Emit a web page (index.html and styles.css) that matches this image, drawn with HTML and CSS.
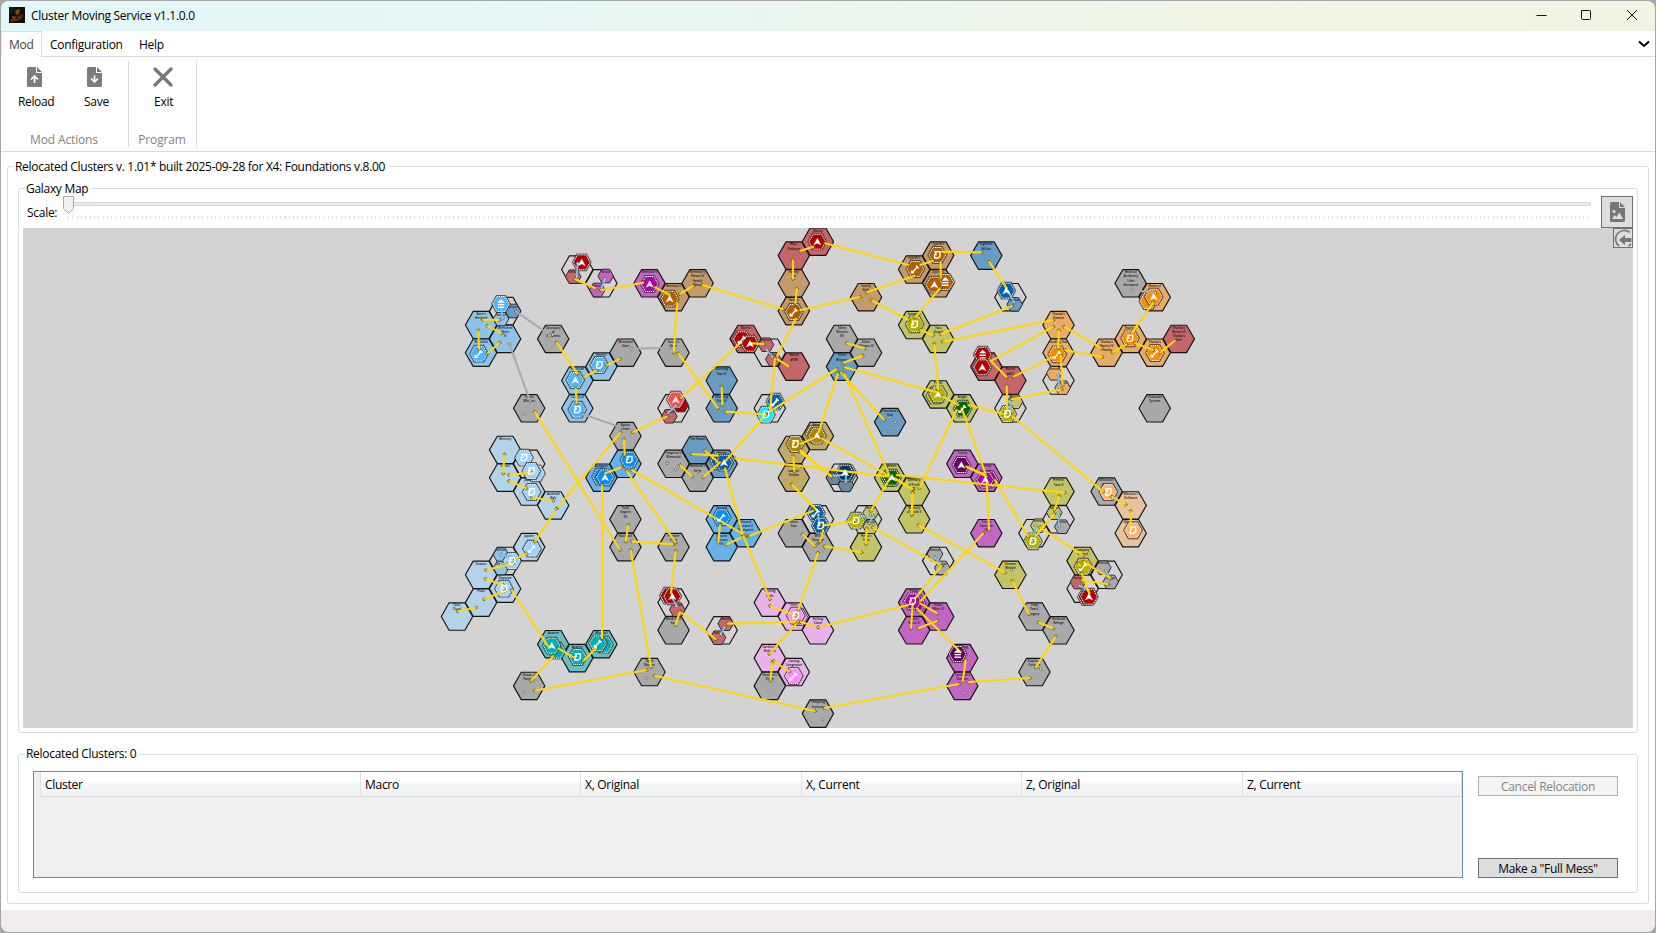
FILE: index.html
```html
<!DOCTYPE html>
<html lang="en">
<head>
<meta charset="utf-8">
<title>Cluster Moving Service</title>
<link rel="stylesheet" href="styles.css">
</head>
<body>
<div class="window">
  <header class="titlebar">
    <svg class="app-icon" viewBox="0 0 16 16"><rect width="16" height="16" fill="#100c08"/><path d="M0 0h6l-2 5-4 3z" fill="#0b2126"/><path d="M1 13l4-3 3 2 4-4 3-1-3 5-5 2-5 1z" fill="#6b2c08"/><path d="M6 4l3-2 2 1-1 4-3 1z" fill="#8a480f"/><path d="M3 9l5 1 4-3-3 3-5 1z" fill="#a35a10"/></svg>
    <span class="title">Cluster Moving Service v1.1.0.0</span>
    <svg class="caption" viewBox="0 0 120 30"><path d="M13.5 14.5h10M58.5 9.500h8a1 1 0 0 1 1 1v7a1 1 0 0 1-1 1h-7a1 1 0 0 1-1-1zM104 9l10 10M114 9l-10 10" fill="none" stroke="#111" stroke-width="1"/></svg>
  </header>
  <nav class="tabs">
    <span class="tab active">Mod</span><span class="tab conf">Configuration</span><span class="tab help">Help</span>
    <svg class="chevron" viewBox="0 0 12 8"><path d="M1 1.500l5 4.500 5-4.500" fill="none" stroke="#000" stroke-width="2"/></svg>
  </nav>
  <section class="ribbon">
    <div class="rgroup actions">
      <div class="rbuttons">
        <div class="rbtn reload"><svg viewBox="0 0 15 20"><path d="M1.500 0H9v6h6v12.500a1.500 1.500 0 0 1-1.500 1.500h-12A1.500 1.500 0 0 1 0 18.500v-17A1.500 1.500 0 0 1 1.500 0zM10 0l5 5h-5z" fill="#7c7c7c"/><path d="M7.500 16V10M4 12.500L7.500 9l3.500 3.500" fill="none" stroke="#fff" stroke-width="1.700"/></svg><span>Reload</span></div>
        <div class="rbtn save"><svg viewBox="0 0 15 20"><path d="M1.500 0H9v6h6v12.500a1.500 1.500 0 0 1-1.500 1.500h-12A1.500 1.500 0 0 1 0 18.500v-17A1.500 1.500 0 0 1 1.500 0zM10 0l5 5h-5z" fill="#7c7c7c"/><path d="M7.500 8.500v6M4 11.500L7.500 15l3.500-3.500" fill="none" stroke="#fff" stroke-width="1.700"/></svg><span>Save</span></div>
      </div>
      <div class="rcaption">Mod Actions</div>
    </div>
    <div class="rgroup program">
      <div class="rbuttons">
        <div class="rbtn exit"><svg viewBox="0 0 20 20"><path d="M2 2l16 16M18 2L2 18" stroke="#767676" stroke-width="3.200" stroke-linecap="round"/></svg><span>Exit</span></div>
      </div>
      <div class="rcaption">Program</div>
    </div>
  </section>
  <main class="content">
    <section class="box outer">
      <h1 class="legend long">Relocated Clusters v. 1.01* built 2025-09-28 for X4: Foundations v.8.00</h1>
      <section class="box galaxy">
        <h2 class="legend">Galaxy Map</h2>
        <div class="scale-row">
          <span class="scale-label">Scale:</span>
          <div class="slider">
            <div class="track"></div>
            <div class="ticks"></div>
            <svg class="thumb" viewBox="0 0 11 18"><path d="M.5.5h10v12l-5 5-5-5z" fill="#f0f0f0" stroke="#acacac"/></svg>
          </div>
          <div class="iconbtn picture"><svg viewBox="0 0 15 20"><path d="M1.500 0H9v6h6v12.500a1.500 1.500 0 0 1-1.500 1.500h-12A1.500 1.500 0 0 1 0 18.500v-17A1.500 1.500 0 0 1 1.500 0zM10 0l5 5h-5z" fill="#767676"/><path d="M2 17l2.500-4 2 2 3-4.500L13 17z" fill="#ddd"/><circle cx="4" cy="9.500" r="1.600" fill="#ddd"/></svg></div>
        </div>
        <div class="map-area">
          <svg id="map" class="map" viewBox="23 228 1610 500"></svg>
          <div class="iconbtn back"><svg viewBox="0 0 18 18"><path d="M15.500 3.200A8 8 0 1 0 5 17M14.500 17l2.500-2" fill="none" stroke="#767676" stroke-width="1.700"/><path d="M5 11l6-5v3h6.500v4H11v3z" fill="#767676"/></svg></div>
        </div>
      </section>
      <section class="box relocated">
        <h2 class="legend">Relocated Clusters: 0</h2>
        <div class="grid">
          <div class="grid-head"><span>Cluster</span><span>Macro</span><span>X, Original</span><span>X, Current</span><span>Z, Original</span><span>Z, Current</span></div>
        </div>
        <div class="side"><button class="btn" disabled>Cancel Relocation</button><button class="btn">Make a "Full Mess"</button></div>
      </section>
    </section>
  </main>
  <footer class="status"></footer>
</div>
<script src="map.js"></script>
</body>
</html>
```
FILE: styles.css
```css
* { box-sizing: border-box; }
body { margin: 0; width: 1656px; height: 933px; overflow: hidden; background: #a5a6a8; font: 12px "Open Sans", "Noto Sans", sans-serif; letter-spacing: -0.28px; color: #000; }
.window { width: 1654px; height: 931px; margin: 1px; background: #fff; border-radius: 8px; overflow: hidden; display: flex; flex-direction: column; }
.titlebar { height: 30px; flex: none; display: flex; align-items: center; padding-left: 8px; background: linear-gradient(90deg, #e2f7f7 0%, #e5f7f6 30%, #f1f5e4 75%, #f2f4e3 100%); }
.app-icon { width: 16px; height: 16px; margin-right: 6px; margin-top: -2px; }
.title { flex: 1; line-height: 16px; padding-bottom: 1px; }
.caption { width: 120px; height: 30px; margin-right: 12px; }
.tabs { height: 26px; flex: none; display: flex; border-bottom: 1px solid #dadbdc; }
.tab { height: 26px; line-height: 28px; }
.tab.active { width: 41px; padding-left: 7px; color: #444; background: #fff; border: 1px solid #dadbdc; border-left-color: #eee; border-bottom: 0; line-height: 26px; }
.tab.conf { width: 97px; padding-left: 8px; letter-spacing: -0.3px; }
.tab.help { flex: 1; }
.chevron { width: 12px; height: 8px; margin: 9px 5px 0 0; }
.ribbon { height: 95px; flex: none; display: flex; border-bottom: 1px solid #dadbdc; padding-top: 4px; }
.rgroup { height: 86px; border-right: 1px solid #dadbdc; display: flex; flex-direction: column; justify-content: space-between; }
.rgroup.actions { width: 128px; }
.rgroup.program { width: 68px; }
.rbuttons { display: flex; }
.rbtn { display: flex; flex-direction: column; height: 56px; }
.rbtn svg { width: 15px; height: 20px; margin: 6px 0 7px 9px; }
.rbtn span { line-height: 16px; }
.rbtn.reload { width: 66px; padding-left: 17px; }
.rbtn.reload span { letter-spacing: -0.35px; }
.rbtn.save { padding-left: 17px; }
.rbtn.save svg { margin-left: 3px; }
.rbtn.exit { padding-left: 25px; }
.rbtn.exit svg { width: 20px; margin-left: -1px; }
.rcaption { color: #838383; text-align: center; line-height: 16px; letter-spacing: -0.15px; padding-right: 1px; margin-bottom: -1px; }
.content { flex: 1; padding: 14px 6px 6px 6px; }
.box { position: relative; border: 1px solid #d5dfe5; border-radius: 3px; }
.legend { position: absolute; left: 6px; top: -8px; margin: 0; padding: 0 4px 0 1px; background: #fff; font-size: 12px; font-weight: 400; line-height: 16px; white-space: nowrap; letter-spacing: -0.3px; }
.outer { height: 738px; padding: 21px 10px 0; }
.galaxy { height: 545px; padding: 6px 4px 0; }
.galaxy > .legend { top: -8px; }
.relocated > .legend { top: -9px; }
.scale-row { display: flex; height: 33px; }
.scale-label { width: 39px; padding: 10px 0 0 4px; line-height: 16px; }
.slider { position: relative; width: 1530px; padding-top: 7px; }
.track { height: 4px; margin: 0 0 0 1px; background: #e7eaea; border: 1px solid #d6dada; }
.ticks { height: 3px; margin: 10px 0 0 6px; background: repeating-linear-gradient(90deg, #e2e2e2 0 1px, transparent 1px 4.330px); }
.thumb { position: absolute; left: 1px; top: 1px; width: 11px; height: 18px; }
.iconbtn { border: 1px solid #707070; background: #ddd; display: flex; align-items: center; justify-content: center; }
.picture { width: 32px; height: 32px; margin-left: 10px; margin-top: 1px; }
.picture svg { width: 15px; height: 20px; }
.map-area { position: relative; width: 1610px; height: 500px; background: #d3d3d3; }
.map { display: block; width: 1610px; height: 500px; }
.back { position: absolute; right: 0; top: 0; width: 20px; height: 20px; }
.back svg { width: 18px; height: 18px; }
.relocated { height: 139px; margin-top: 21px; padding: 16px 19px 0 14px; display: flex; justify-content: space-between; }
.grid { width: 1430px; height: 107px; border: 1px solid #688caf; background: #f0f0f0; padding-left: 6px; }
.grid-head { display: grid; grid-template-columns: 320px 220px 221px 220px 221px 1fr; height: 25px; border-bottom: 1px solid #d5d5d5; border-left: 1px solid #e0e0e0; background: linear-gradient(#fff 0, #fff 40%, #f7f8fa 41%, #f1f2f4 100%); }
.grid-head span { line-height: 25px; padding-left: 4px; border-right: 1px solid #e0e0e0; }
.side { width: 140px; height: 102px; margin-top: 5px; display: flex; flex-direction: column; justify-content: space-between; }
.btn { height: 20px; padding: 0; border: 1px solid #707070; border-radius: 0; background: #ddd; color: #000; font: inherit; letter-spacing: inherit; line-height: 19px; }
.btn:disabled { background: #f4f4f4; border-color: #adb2b5; color: #838383; }
.status { height: 22px; flex: none; background: #f0edec; }
.label { font: 600 3.1px "Open Sans", sans-serif; letter-spacing: 0; fill: #111; text-anchor: middle; }
```
FILE: map.js
```js
const ns = 'http://www.w3.org/2000/svg';
const map = document.getElementById('map');
function add(tag, attrs, text) {
  const e = document.createElementNS(ns, tag);
  for (const k in attrs) e.setAttribute(k, attrs[k]);
  if (text) e.textContent = text;
  map.appendChild(e);
  return e;
}
function hexPoints(x, y, w, h) {
  return [[-w, 0], [-w / 2, -h], [w / 2, -h], [w, 0], [w / 2, h], [-w / 2, h]]
    .map(p => (x + p[0]).toFixed(1) + ',' + (y + p[1]).toFixed(1)).join(' ');
}
const colors = {
  g: '#a9a9a9', l: '#8fc3ea', p: '#b3d3eb', u: '#67b1eb', s: '#689cc4', r: '#c4666a', n: '#c49a6a',
  v: '#c265c4', y: '#c3c368', o: '#e9ac68', k: '#e8b3ea', t: '#67bfc1', d: '#c0aa68', h: '#e8c39c', e: 'none', q: '#6888a0'
};
// Clusters: column, row, colour, label lines
const clusters = `5 2 e|6 3 e|8 3 v Brennan's|9 4 n Brennan's|10 3 n Brennan's/Nexus IV/Family/Nhuut|2 5 e|1 6 l Bore's/Heritage|2 7 l Wretched/Skies/IV|1 8 l Watchful|4 7 g Sanctuary/of/Darkness|7 8 g Wretched/Gate|9 8 g Faulty's/Gate|6 9 l Heretic|5 10 l Hatikvah|5 12 l Litany of|3 12 g Silent/Witness|9 12 e|7 14 g Kaitos/Prime|7 16 u The|6 17 u Antigone|2 15 p Mercury|2 17 p Venus|3 16 e|9 16 g Emperor's/Memorial|10 15 s The Reach|11 16 s Argon|10 17 g Hatikvah's/Edge
15 0 r Matrix|14 1 r Rhy's/Defiance|14 3 n Family/Tkr|14 5 n Family|17 4 n Family/Kritt|19 2 n Zyarth's|20 1 n Zyarth's|20 3 n Zyarth's|19 6 y Ianamus|20 7 y Two/Grand|12 7 r Matrix|13 8 e|14 9 r Matrix/#598|16 7 g Silent/Witness/XII|17 8 g Silent/Witness XI|16 9 s Silent/Witness|11 10 s Morning/Star IV|11 12 s Morning/Star III|13 12 e|18 13 s President's/End|20 11 y Profit|21 12 y Bright|15 14 d Hewa's|14 15 d Pious|14 17 d Wellspring/Ioannis'/Dream|16 17 e|18 17 y Eighteen
22 1 s Eighteen/Billion|23 4 e|28 3 g Heart of/Acrimony/I the/Boneyard|29 4 o Heart of|25 6 o Thuruk's/Demise|25 8 o Guiding Star|25 10 e|27 8 o Tharka's/Ravine IV/Tharka|28 7 o Tharka's|29 8 o Tharka's|30 7 r Tharka's/Ravine III/Tharka's/Fall|22 9 r Matrix|23 10 r Matrix/#451|23 12 e|29 12 g Unknown/System|21 16 v Trinity|22 17 v Trinity/Sanctum
3 18 p Jupiter|4 19 p Asteroid/Belt|3 22 p Jupiter|2 23 e|1 24 p Uranus|2 25 p Neptune|1 26 p Pluto|0 27 p Oort/Cloud|7 20 g Void/Segaris/XII|7 22 g Hatikvah|9 22 g Frontier/Edge|9 26 e|9 28 g Black Hole/Sun|4 29 t Avarice|5 30 t Avarice|6 29 t Windfall|3 32 g Ocean of/Fantasy|8 31 g Open/Market
11 20 u Second|12 21 u Second/Contact II/Flashpoint|11 22 u Second/Contact/VI|14 21 g Silent/Star|15 20 e|15 22 g Wild/Passage/IV|17 20 e|17 22 y Hewa's/Twin|19 18 y Memory/of Profit/X|19 20 y Memory/of Profit II|20 23 e|13 26 k Lasting/Light|14 27 k Fires|15 28 k Rolling/Claim|11 28 e|13 30 k Cardinal's/Redress|14 31 k Lasting/Vengeance|13 32 g Pontifex's/Claim|15 34 g Tempting/Fortune|19 26 v Pious|20 27 v Pious/Mists IV|19 28 v Pious/Mists III
25 18 y Heretic/Twin V|25 20 e|24 21 e|27 18 g Mitsuno's/Oscar|28 19 h Mitsuno's/Defiance|28 21 h Mitsuno's|22 21 v Trinity/Sanctum/VII|23 24 y Unseen/Wealth|26 23 y Company/Regard|27 24 e|26 25 e|24 27 g Leap/Years'/Legacy|25 28 g Hatikvah/Refuge|24 31 g Nopileos'/Fortune|21 30 v Lasting|21 32 v Cardinal's/Domain`;
clusters.split(/[|\n]/).forEach(row => {
  const m = row.match(/^(\d+) (\d+) (\w) ?(.*)$/);
  const x = 457 + m[1] * 24.06, y = 241.7 + m[2] * 13.88;
  add('polygon', { points: hexPoints(x, y, 15.7, 13.7), fill: colors[m[3]], stroke: '#141414', 'stroke-width': 1.15 });
  if (m[4]) m[4].split('/').forEach((t, i) => add('text', { x, y: y - 10.2 + i * 4.2, class: 'label' }, t));
});
// Sections of the galaxy; coordinates within a section are in thirds of a pixel
const origin = { A: [430, 225], B: [690, 225], C: [940, 225], D: [430, 470], E: [690, 470], F: [940, 470], G: [640, 430], H: [820, 430] };
const px = (s, x, y) => [origin[s][0] + x / 3, origin[s][1] + y / 3];
const sectors = {
  A: '430 155 r|502 195 v|527 153 v|213 237 l|249 258 s|213 282 l|718 574 r|752 540 R|310 745 p',
  B: '228 359 r|250 403 r|225 568 y', C: '224 238 s|343 445 o|368 488 o|225 530 y',
  D: '213 254 l|213 294 l|246 275 l|742 419 r', E: '107 461 r|84 503 r|542 128 y|542 170 y|735 252 g|757 294 g',
  F: '343 128 y|367 170 g|295 167 y|490 293 g|512 336 g|414 336 r', H: '42 143 q|78 165 q|80 125 q'
};
for (const s in sectors) sectors[s].split('|').forEach(v => {
  const a = v.split(' '), p = px(s, +a[0], +a[1]);
  add('polygon', { points: hexPoints(p[0], p[1], 7.8, 6.8), fill: a[2] === 'R' ? '#b00000' : colors[a[2]], stroke: '#222', 'stroke-width': .9 });
  add('text', { x: p[0], y: p[1] - 3.3, class: 'label' }, 'Sector');
});
// Stations: x, y, symbol, colour
const stations = {
  A: '455 112 A b30000|659 177 A b000b0|719 221 A b35f00|213 237 S 4db5ff|147 386 W 4db5ff|508 420 D 4db5ff|436 465 A 4db5ff|442 554 D 4db5ff|737 524 A ff4d4d|282 698 D 99d3ff|318 745 - 99d3ff|304 738 D 99d3ff|598 704 D 0090ff|513 755 - 0090ff|525 757 A 0090ff',
  B: '382 50 A b30000|312 261 W b35f00|676 132 W b35f00|742 90 D b35f00|766 171 S b35f00|733 179 A b35f00|674 298 D b3b300|156 343 W b30000|180 356 A b30000|256 530 W 0062b0|228 569 D 00f0ff|736 512 - b3b300|744 508 A b3b300|373 627 - b38600|381 632 A b38600|316 657 D b38600',
  C: '199 197 A 0062b0|625 228 - ff8c00|641 215 A ff8c00|352 388 W ff8c00|570 340 D ff8c00|645 384 W ff8c00|128 389 S b30000|127 427 A b30000|68 551 W 006800|202 567 D b3b300',
  D: '305 66 D 99d3ff|306 236 W 99d3ff|246 273 D 99d3ff|222 356 D 99d3ff|716 377 - b30000|727 379 A b30000|380 542 - 00b0b3|365 527 A 00b0b3|443 561 D 00b0b3|522 524 - 00b0b3|504 520 W 00b0b3',
  E: '95 142 W 0090ff|378 129 W 0062b0|392 167 D 0062b0|498 152 D b3b300|325 441 - ff8cff|317 437 D ff8cff|311 618 W ff8cff|680 401 - b000b0|668 394 D b000b0',
  F: '53 552 S 650065|279 214 D b3b300|505 66 D ffb36b|579 181 D ffb36b|430 290 W b3b300|440 381 - b30000|447 380 A b30000',
  G: '238 94 - 0062b0|252 98 A 0062b0',
  H: '83 130 - 003a68|75 128 A 003a68|210 144 - 006800|216 143 A 006800|424 105 A 650065|507 148 - b000b0|496 149 A b000b0'
};
const symbols = { A: 'M0-3.300L3.700 3.300L0 1.700L-3.700 3.300Z', D: 'M-2.200-3.200H2.700V1.200L.8 3H-2.700V-.5H-1.200Z', W: 'M-2.700 3.200L2.500-2.700M1.200-3.700V-1.300H3.700M-3.700 1.500V3.700H-1.300', S: 'M-2-2L0-4L2-2ZM-3.200 .6H3.200M-3.200 3.200H3.200' };
const pending = [];
for (const s in stations) stations[s].split('|').forEach(v => {
  const a = v.split(' '), p = px(s, +a[0], +a[1]), x = p[0], y = p[1];
  add('polygon', { points: hexPoints(x, y, 9.4, 8.4), fill: '#222', stroke: '#333', 'stroke-opacity': .45, 'stroke-width': 1.4 });
  add('polygon', { points: hexPoints(x, y, 8.4, 7.5), fill: '#' + a[3], stroke: '#fff', 'stroke-width': 1, 'stroke-dasharray': '1.5 .6' });
  if (symbols[a[2]]) pending.push([a[2], x, y]);
});
const links = {
  A: '435 162 497 190|512 196 640 173|675 187 720 210|750 207 790 182|742 232 731 383|158 284 208 285|172 302 215 325|145 316 147 372|173 385 209 353|380 352 443 447|462 456 500 437|530 422 570 401|437 490 440 535|608 622 712 574|745 385 864 550|582 643 584 690|572 622 380 851|314 560 570 975|752 520 935 350|223 688 220 745|525 745 575 727',
  B: '330 78 370 65|405 55 655 120|309 105 309 162|321 190 316 235|37 180 280 253|330 256 510 216|530 202 675 152|690 120 730 107|755 80 875 82|752 110 752 160|750 190 675 278|545 226 655 285|690 315 730 330|318 280 258 400|752 327 967 243|758 350 1090 285|733 357 745 495|758 515 805 540|185 355 222 357|258 400 297 425|255 400 240 555|470 355 525 370|518 392 460 413|440 432 235 562|107 560 225 568|95 485 97 540|463 427 740 502|444 445 385 625|452 442 583 585|462 445 600 755|228 568 103 712|395 640 670 793|330 680 425 755|330 657 370 640|800 555 688 790',
  C: '147 110 200 190|372 305 485 370|517 382 560 358|585 355 640 375|660 383 705 347|640 232 575 325|155 407 340 305|150 405 200 457|220 455 340 395|357 316 355 370|375 375 487 396|362 390 368 480|365 493 215 523|200 482 202 555|85 540 190 567|215 572 490 800|65 550 140 755|78 725 137 750',
  D: '590 3 737 218|605 0 948 197|237 15 305 8|237 33 290 55|305 82 370 92|380 116 315 215|290 250 255 268|250 280 168 300|167 327 220 345|225 362 163 388|83 424 138 413|245 360 355 530|385 535 430 562|460 573 500 532|516 45 516 505|370 558 303 633|314 662 650 600|673 617 1155 723|602 240 663 592|605 214 730 223|595 165 587 215|737 243 723 370|750 425 858 508|750 425 736 466',
  E: '90 165 85 218|108 224 165 198|178 198 370 122|337 193 375 228|400 180 390 215|403 229 515 247|384 248 325 420|400 166 490 155|530 175 527 222|548 172 755 287|668 68 666 133|685 165 945 308|755 287 675 385|690 395 880 190|240 408 318 437|330 455 385 472|385 472 655 405|112 461 325 455|320 460 238 552|250 573 298 605|247 577 241 632|668 400 663 475|690 400 742 430|742 452 685 475|680 415 812 547|403 714 807 642',
  F: '165 30 265 200|358 78 343 120|343 132 285 200|300 172 430 257|430 275 512 325|425 330 505 343|415 280 422 290|425 310 448 370|217 333 267 433|295 457 340 475|347 500 287 592|270 624 85 636|77 570 68 635|515 80 557 103|572 123 573 180',
  G: '155 72 235 77|195 62 235 97|120 105 157 140|190 142 240 97|285 85 750 140|480 60 575 140|255 115 310 318|310 318 390 508|460 78 463 125|455 163 530 240',
  H: '230 135 735 188|225 145 278 178|210 145 152 243|440 110 500 140|500 150 507 300|278 188 275 255'
};
const grayLinks = { A: '258 260 360 330|238 357 300 527|605 371 718 368|460 568 575 608', C: '577 195 645 203' };
const inner = { A: '443 115 440 155|525 163 512 195|213 245 218 280|737 543 715 563', B: '230 375 247 395|258 530 235 560', C: '205 200 222 232|355 450 357 487|213 523 210 565', D: '213 254 240 262|213 282 235 280|727 385 740 408', E: '103 473 92 492|735 263 757 287|385 135 388 165|510 140 550 138|550 138 538 160', F: '355 130 357 167|287 168 283 210|497 303 512 327|420 347 445 362', H: '42 138 80 133|78 133 78 155' };
function drawLinks(set, color, width, dots) {
  for (const s in set) set[s].split('|').forEach(v => {
    const a = v.split(' ').map(Number), p = px(s, a[0], a[1]), q = px(s, a[2], a[3]);
    if (dots) [p, q].forEach(c => add('circle', { cx: c[0], cy: c[1], r: 1.4, fill: dots, stroke: '#222', 'stroke-width': .8, 'stroke-dasharray': '1.2 .7' }));
    add('line', { x1: p[0], y1: p[1], x2: q[0], y2: q[1], stroke: color, 'stroke-width': width, 'stroke-linecap': 'butt' });
  });
}
drawLinks(grayLinks, '#a9a9a9', 2, '#ddd');
drawLinks(inner, '#78c0ee', 1.8, '#eaf5ff');
drawLinks(links, '#ffd60a', 2.1, '#e0c000');
// Station symbols stay readable above the links
pending.forEach(([kind, x, y]) => {
  add('path', { d: symbols[kind], transform: `translate(${x} ${y})`, fill: kind === 'A' || kind === 'S' ? '#fff' : 'none', stroke: '#fff', 'stroke-width': kind === 'A' ? .3 : 1.4 });
});
const dots = { A: '357 333|282 567|712 715|368 330', B: '600 577|617 591|607 610', D: '282 665|650 625|370 92|378 116', E: '402 242|398 749|384 472', F: '215 300|73 668|302 597', G: '82 100|107 119|173 126|463 125', H: '152 255|148 280|160 283' };
for (const s in dots) dots[s].split('|').forEach(v => {
  const a = v.split(' '), p = px(s, +a[0], +a[1]);
  add('circle', { cx: p[0], cy: p[1], r: 1.2, fill: '#f5edaa', stroke: '#222', 'stroke-width': .8, 'stroke-dasharray': '1 .7' });
});
```
